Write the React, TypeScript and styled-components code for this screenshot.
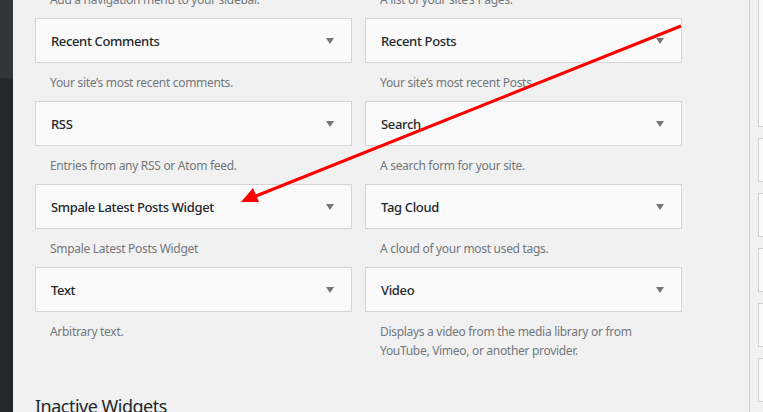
import React from "react";
import styled, { createGlobalStyle } from "styled-components";

const Global = createGlobalStyle`
  html, body { margin: 0; padding: 0; }
  body {
    width: 763px; height: 412px; overflow: hidden;
    background: #f1f1f1;
    font-family: "Noto Sans", "Open Sans", sans-serif;
  }
`;

const Page = styled.div`
  display: flex;
  width: 763px;
  height: 412px;
  overflow: hidden;
  position: relative;
`;

const AdminMenu = styled.div`
  width: 13px;
  flex: none;
  display: flex;
  flex-direction: column;
`;

const MenuPart = styled.div<{ $h?: number; $c: string }>`
  background: ${(p) => p.$c};
  ${(p) => (p.$h ? `height: ${p.$h}px; flex: none;` : "flex: 1;")}
`;

const Main = styled.main`
  width: 736px;
  flex: none;
  padding-left: 22px;
  box-sizing: border-box;
`;

const Grid = styled.div`
  display: grid;
  grid-template-columns: 317px 317px;
  column-gap: 13px;
  margin-top: -65px;
`;

const Widget = styled.div`
  display: flex;
  flex-direction: column;
`;

const WidgetTop = styled.div`
  height: 45px;
  box-sizing: border-box;
  border: 1px solid #d4d5d7;
  background: #fafafa;
  display: flex;
  align-items: center;
  justify-content: space-between;
  padding: 0 17px 0 15px;
`;

const WidgetTitle = styled.h3`
  margin: 0;
  font-size: 13px;
  font-weight: 500;
  color: #23282d;
  letter-spacing: -0.35px;
`;

const Caret = styled.span`
  width: 0;
  height: 0;
  border-left: 4.5px solid transparent;
  border-right: 4.5px solid transparent;
  border-top: 6px solid #72777c;
`;

const Desc = styled.p`
  margin: 0;
  padding: 10px 15px 9px;
  font-size: 12px;
  line-height: 19px;
  color: #72777c;
  letter-spacing: -0.3px;
`;

const Heading = styled.h2`
  margin: 25px 0 0;
  font-size: 18px;
  font-weight: 400;
  color: #23282d;
  letter-spacing: -0.5px;
`;

const Divider = styled.div`
  width: 1px;
  flex: none;
  background: #cfcfcf;
`;

const Side = styled.aside`
  flex: 1;
  padding-left: 8px;
  display: flex;
  flex-direction: column;
  gap: 11px;
  margin-top: -9px;
`;

const SideBox = styled.div<{ $h: number }>`
  height: ${(p) => p.$h}px;
  flex: none;
  box-sizing: border-box;
  border: 1px solid #d0d0d0;
  border-right: none;
  background: #fafafa;
`;

const ArrowLayer = styled.svg`
  position: absolute;
  left: 0;
  top: 0;
  pointer-events: none;
`;

const widgets: [string, string][] = [
  ["Navigation Menu", "Add a navigation menu to your sidebar."],
  ["Pages", "A list of your site’s Pages."],
  ["Recent Comments", "Your site’s most recent comments."],
  ["Recent Posts", "Your site’s most recent Posts."],
  ["RSS", "Entries from any RSS or Atom feed."],
  ["Search", "A search form for your site."],
  ["Smpale Latest Posts Widget", "Smpale Latest Posts Widget"],
  ["Tag Cloud", "A cloud of your most used tags."],
  ["Text", "Arbitrary text."],
  ["Video", "Displays a video from the media library or from YouTube, Vimeo, or another provider."],
];

export default function App() {
  return (
    <>
      <Global />
      <Page>
        <AdminMenu>
          <MenuPart $h={78} $c="#31363b" />
          <MenuPart $c="#23282d" />
        </AdminMenu>
        <Main>
          <Grid>
            {widgets.map(([t, d]) => (
              <Widget key={t}>
                <WidgetTop>
                  <WidgetTitle>{t}</WidgetTitle>
                  <Caret />
                </WidgetTop>
                <Desc>{d}</Desc>
              </Widget>
            ))}
          </Grid>
          <Heading>Inactive Widgets</Heading>
        </Main>
        <Divider />
        <Side>
          <SideBox $h={136} />
          <SideBox $h={44} />
          <SideBox $h={44} />
          <SideBox $h={44} />
          <SideBox $h={44} />
          <SideBox $h={44} />
        </Side>
        <ArrowLayer width="763" height="412" viewBox="0 0 763 412">
          <line x1="681" y1="26" x2="256" y2="196" stroke="#ff0000" strokeWidth="3" />
          <polygon points="241,202 253,188 259,202" fill="#ff0000" />
        </ArrowLayer>
      </Page>
    </>
  );
}
